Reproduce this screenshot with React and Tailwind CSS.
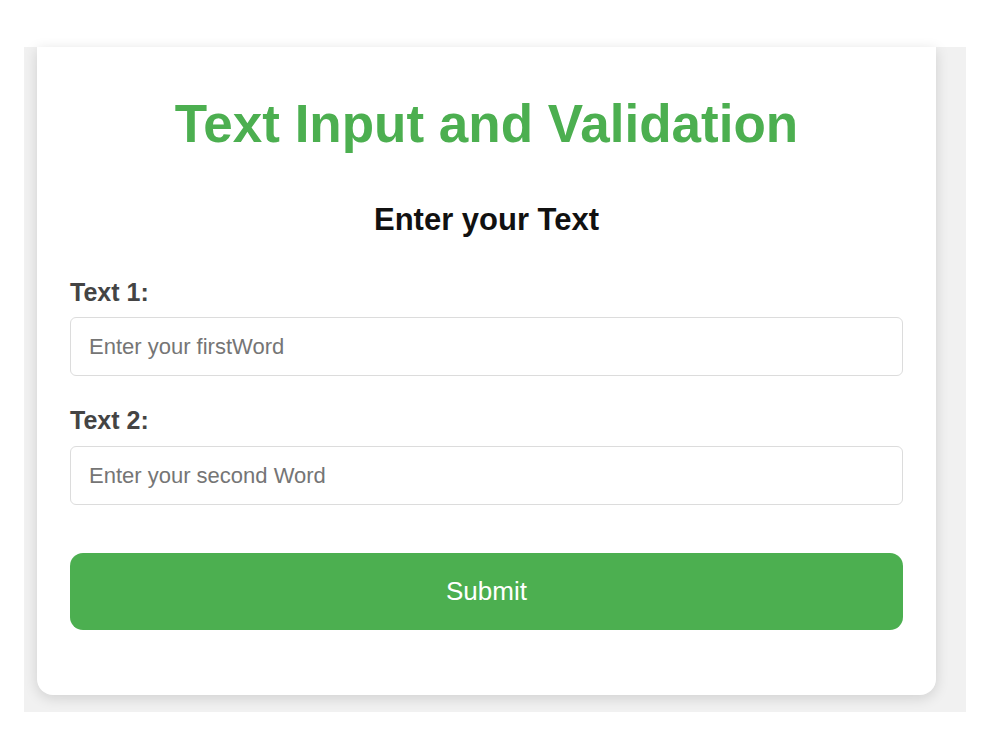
export default function App() {
  return (
    <div className="min-h-screen bg-white pt-[47px] font-['Liberation_Sans',Arial,sans-serif]">
      <div className="ml-[24px] w-[942px] h-[665px] bg-[#f1f1f1] pl-[13px]">
        <div className="w-[899px] bg-white rounded-b-[16px] shadow-[0_3px_14px_rgba(0,0,0,0.14)] px-[33px] pt-[47px] pb-[65px]">
          <h1 className="text-center text-[53px] leading-[60px] font-bold text-[#4caf50]">
            Text Input and Validation
          </h1>
          <h2 className="mt-[48px] text-center text-[31px] leading-[36px] font-bold text-[#111]">
            Enter your Text
          </h2>
          <form className="mt-[40px] flex flex-col" onSubmit={(e) => e.preventDefault()}>
            <label htmlFor="text1" className="text-[25px] leading-[28px] font-bold text-[#444]">
              Text 1:
            </label>
            <input
              id="text1"
              type="text"
              placeholder="Enter your firstWord"
              className="mt-[11px] h-[59px] w-full rounded-[6px] border border-[#dcdcdc] px-[18px] text-[22px] text-[#333] placeholder:text-[#757575] outline-none"
            />
            <label htmlFor="text2" className="mt-[30px] text-[25px] leading-[28px] font-bold text-[#444]">
              Text 2:
            </label>
            <input
              id="text2"
              type="text"
              placeholder="Enter your second Word"
              className="mt-[12px] h-[59px] w-full rounded-[6px] border border-[#dcdcdc] px-[18px] text-[22px] text-[#333] placeholder:text-[#757575] outline-none"
            />
            <button
              type="submit"
              className="mt-[48px] h-[77px] w-full rounded-[13px] bg-[#4caf50] text-[26px] text-white"
            >
              Submit
            </button>
          </form>
        </div>
      </div>
    </div>
  );
}
